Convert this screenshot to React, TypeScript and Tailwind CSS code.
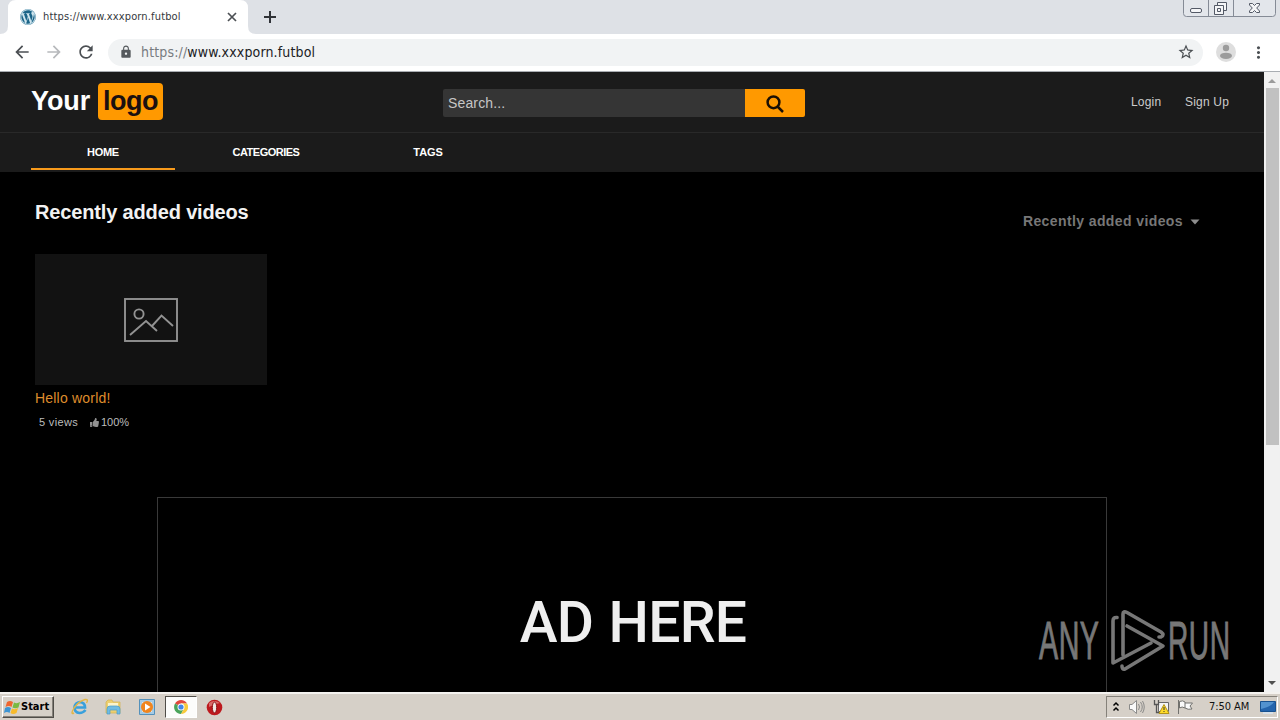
import React from "react";
import { FaThumbsUp, FaWordpress } from "react-icons/fa";
import { MdArrowBack, MdArrowForward, MdRefresh, MdLock, MdStarBorder, MdMoreVert } from "react-icons/md";

function WindowControls() {
  return (
    <svg className="absolute right-[3px] top-0" width="94" height="17" viewBox="0 0 94 17" fill="none" stroke="#858b96">
      <path d="M.5 0V13.5Q.5 16.500 3.500 16.500H89.500Q92.500 16.500 92.500 13.500V0M25.500 0V16M50.500 0V16" fill="#e3e6eb" />
      <g stroke="#535966" fill="#f4f5f7">
        <rect x="7.500" y="8.500" width="11" height="4" rx="1.500" />
        <path d="M34.500 2.500H43.500V10.500H34.500Z" />
        <path d="M31.500 5.500H40.500V14.500H31.500Z" />
        <path d="M34.500 8.500H37.500V11.500H34.500Z" />
        <path d="M66.500 3.500H69.500L71.500 5.500 73.500 3.500H76.500V5L73.700 8 76.500 11V12.500H73.500L71.500 10.500 69.500 12.500H66.500V11L69.300 8 66.500 5Z" />
      </g>
    </svg>
  );
}

function BrowserChrome() {
  return (
    <header className="h-[72px] shrink-0 border-b border-[#a9adb2] bg-white">
      <div className="relative flex h-[34px] bg-[#dee1e6]">
        <svg className="absolute left-0 top-0" width="256" height="34" viewBox="0 0 256 34">
          <path d="M0 34Q8 34 8 26V8Q8 0 16 0H240Q248 0 248 8V26Q248 34 256 34Z" fill="#fff" />
        </svg>
        <div className="relative flex w-[248px] items-center pl-5">
          <span className="flex h-4 w-4 items-center justify-center rounded-full bg-[#cfe5ee]">
            <FaWordpress size={16} color="#1b6488" />
          </span>
          <span className="ml-[7px] w-[183px] whitespace-nowrap font-['DejaVu_Sans_Condensed','DejaVu_Sans',sans-serif] text-[11px] font-stretch-condensed tracking-[0.15px] text-[#35383c]">
            https://www.xxxporn.futbol
          </span>
          <svg width="12" height="12" viewBox="0 0 12 12" stroke="#4c5054" strokeWidth="1.700">
            <path d="M2 2L10 10M10 2L2 10" />
          </svg>
        </div>
        <svg className="ml-[15px] mt-[10px]" width="14" height="14" viewBox="0 0 14 14" stroke="#303338" strokeWidth="2">
          <path d="M7 1V13M1 7H13" />
        </svg>
        <WindowControls />
      </div>
      <div className="flex h-9 items-center">
        <MdArrowBack className="ml-3" size={20} color="#4b4f53" />
        <MdArrowForward className="ml-3" size={20} color="#b7b9bc" />
        <MdRefresh className="ml-3" size={20} color="#4b4f53" />
        <div className="ml-3 flex h-[27px] w-[1095px] items-center rounded-full bg-[#f1f3f4] pl-[11px] pr-2">
          <MdLock size={14} color="#55595d" />
          <span className="ml-2 flex-1 whitespace-nowrap font-['DejaVu_Sans_Condensed','DejaVu_Sans',sans-serif] text-[14px] font-stretch-condensed tracking-[0.15px] text-[#202124]">
            <span className="text-[#777b80]">https://</span>www.xxxporn.futbol
          </span>
          <MdStarBorder size={18} color="#4b4f53" />
        </div>
        <svg className="ml-[13px]" width="20" height="20" viewBox="0 0 20 20">
          <circle cx="10" cy="10" r="10" fill="#dedede" />
          <circle cx="10" cy="6" r="3.200" fill="#9c9c9c" />
          <ellipse cx="10" cy="13.800" rx="6" ry="3.100" fill="#9c9c9c" />
        </svg>
        <MdMoreVert className="ml-[13px]" size={19} color="#4b4f53" />
      </div>
    </header>
  );
}

function SiteHeader() {
  return (
    <div className="h-[100px] shrink-0 bg-[#1b1b1b]">
      <div className="flex h-[61px] border-b border-[#292929]">
        <div className="ml-[31px] mt-[11px] flex h-[37px] w-[412px] items-center text-[27px] font-bold">
          <span className="w-[67px] whitespace-nowrap tracking-[-0.1px] text-white">Your</span>
          <span className="flex h-[37px] w-[65px] items-center justify-center rounded-[4px] bg-[#ff9900] tracking-[-0.5px] text-[#1b1010]">
            logo
          </span>
        </div>
        <div className="mt-[17px] flex h-7 w-[362px]">
          <div className="flex w-[302px] items-center rounded-l-[2px] bg-[#353535] pl-[5px] text-[14px] tracking-[0.15px] text-[#c6c6c6]">
            Search...
          </div>
          <div className="flex w-[60px] items-center justify-center rounded-r-[2px] bg-[#ff9900] pt-[2px]">
            <svg width="18" height="18" viewBox="0 0 18 18" fill="none" stroke="#1b1005">
              <circle cx="7.500" cy="7.300" r="5.900" strokeWidth="2.500" />
              <path d="M11.500 11.500L17 17" strokeWidth="2.500" />
            </svg>
          </div>
        </div>
        <div className="ml-[326px] mt-[22px] flex text-[12px] leading-4 tracking-[0.2px] text-[#cccccc]">
          <span className="w-[54px]">Login</span>
          <span className="whitespace-nowrap">Sign Up</span>
        </div>
      </div>
      <nav className="flex h-[39px] pl-[31px] text-[11px] font-bold text-white">
        <div className="h-[37px] w-[144px] border-b-2 border-[#f79a1b] pt-[11px] text-center leading-4 tracking-[-0.3px]">HOME</div>
        <div className="w-[182px] pt-[11px] text-center leading-4 tracking-[-0.5px]">CATEGORIES</div>
        <div className="w-[142px] pt-[11px] text-center leading-4 tracking-[-0.1px]">TAGS</div>
      </nav>
    </div>
  );
}

function VideoCard() {
  return (
    <article className="ml-[35px] mt-[17px] w-[232px]">
      <div className="flex h-[131px] items-center justify-center bg-[#121212]">
        <svg width="54" height="44" viewBox="0 0 54 44" fill="none" stroke="#929292" strokeWidth="1.900">
          <rect x="1" y="1" width="52" height="42" />
          <circle cx="15" cy="16" r="4.600" />
          <path d="M6 37L22 23L33 33M28 28L37.500 17.500L49 28" />
        </svg>
      </div>
      <h2 className="mt-[4px] text-[14px] leading-[18px] tracking-[0.2px] text-[#df8c2c]">Hello world!</h2>
      <div className="mt-2 flex items-center pl-1 text-[11px] leading-[14px] text-[#bdbdbd]">
        <span className="w-[51px] tracking-[0.35px]">5 views</span>
        <FaThumbsUp size={9} color="#929292" />
        <span className="ml-[2px]">100%</span>
      </div>
    </article>
  );
}

function Scrollbar() {
  return (
    <div className="flex w-4 shrink-0 flex-col items-center bg-[#f1f1f1]">
      <svg width="16" height="16" viewBox="0 0 16 16"><path d="M4 11L8 7L12 11Z" fill="#9b9b9b" /></svg>
      <div className="h-[357px] w-[13px] bg-[#c1c1c1]" />
      <svg className="mt-auto" width="16" height="17" viewBox="0 0 16 17"><path d="M4 6H12L8 10Z" fill="#505050" /></svg>
    </div>
  );
}

function Watermark() {
  return (
    <div className="absolute right-[48px] top-[609px] flex h-[63px] w-[193px] items-center text-[#777777]">
      <div className="flex w-[71px] items-center">
        <span className="origin-left scale-x-[0.54] whitespace-nowrap font-['Liberation_Sans',sans-serif] text-[53px] leading-none tracking-[1px] [-webkit-text-stroke:1px_#777777]">ANY</span>
      </div>
      <svg className="shrink-0" width="57" height="63" viewBox="70 0 57 63" fill="none" stroke="currentColor" strokeWidth="3.600" strokeLinecap="round" strokeLinejoin="round">
        <path d="M77 8.500Q73 8 73 12V54L111 34" />
        <path d="M83 46V5Q83 1.500 87 3.500L121 23Q125 26 121 28L119 28" />
        <path d="M87 17L123 37L85 60Q82 61 82 57" />
      </svg>
      <div className="ml-px flex w-[64px] items-center">
        <span className="origin-left scale-x-[0.53] whitespace-nowrap font-['Liberation_Sans',sans-serif] text-[53px] leading-none tracking-[1px] [-webkit-text-stroke:1px_#777777]">RUN</span>
      </div>
    </div>
  );
}

function Page() {
  return (
    <div className="flex h-[620px] shrink-0">
      <main className="flex min-w-0 flex-1 flex-col overflow-hidden bg-black">
        <SiteHeader />
        <div className="flex h-[65px] shrink-0 justify-between pl-[35px] pr-[64px]">
          <h1 className="pt-[28px] text-[20px] font-bold leading-6 tracking-[-0.15px] text-[#f2f2f2]">Recently added videos</h1>
          <div className="flex items-start pt-[40px] text-[14px] font-bold leading-[18px] tracking-[0.4px] text-[#777777]">
            <span>Recently added videos</span>
            <svg className="ml-[7px] mt-[7px]" width="10" height="6" viewBox="0 0 10 6"><path d="M.5 .5H9.500L5 5.500Z" fill="#8d8d8d" /></svg>
          </div>
        </div>
        <VideoCard />
        <div className="ml-[157px] mt-[68px] flex h-[250px] w-[950px] shrink-0 items-center justify-center border border-[#393939]">
          <span className="whitespace-nowrap pl-[2px] font-[Roboto,sans-serif] text-[57px] font-medium leading-none tracking-[-0.8px] text-[#efefef] [word-spacing:2px]">AD HERE</span>
        </div>
      </main>
      <Scrollbar />
    </div>
  );
}

function StartFlag() {
  return (
    <svg width="17" height="17" viewBox="0 0 17 17">
      <path d="M3 3Q6 1 9 3L7.500 8Q5 6 1.500 8Z" fill="#ef652f" />
      <path d="M10 3.500Q13 5 16 3L14.500 8.500Q11 10 8.500 8.500Z" fill="#79b943" />
      <path d="M1 9Q4 7 7 9L5.500 14Q3 12 0 14Z" fill="#3d94d3" />
      <path d="M8 9.500Q11 11 14 9L12.500 14Q9 16 6.500 14Z" fill="#f7ba2b" />
    </svg>
  );
}

function Taskbar() {
  return (
    <footer className="flex h-7 shrink-0 items-center border-t-2 border-[#f4f2ef] bg-[#d6d0c8]">
      <div className="ml-[2px] flex h-[22px] w-[52px] items-center border border-b-[#504d48] border-l-white border-r-[#504d48] border-t-white pl-px shadow-[inset_-1px_-1px_#85817a]">
        <StartFlag />
        <span className="font-['DejaVu_Sans_Condensed','DejaVu_Sans',sans-serif] text-[11px] font-bold font-stretch-condensed tracking-[0px] text-black">Start</span>
      </div>
      <svg className="ml-[17px]" width="18" height="18" viewBox="0 0 18 18" fill="none">
        <path d="M14.500 12Q12 15 8.500 15Q3.500 14.500 3.500 9.500Q4 4.500 9 4Q14 4.500 14 9.500H5" stroke="#39a0dc" strokeWidth="2.700" />
        <path d="M3 15Q-1 17 3 10Q8 3 14 1.500Q18 1 15.500 5" stroke="#e3b646" strokeWidth="1.400" />
      </svg>
      <svg className="ml-4" width="17" height="18" viewBox="0 0 17 18">
        <path d="M1 4L3 2H7L8 4H15V15H1Z" fill="#edcf70" stroke="#d2b34f" strokeWidth=".7" />
        <path d="M3 5H13V8H3Z" fill="#fbf4cb" />
        <path d="M2 16V11Q2 8 5 8H12Q15 8 15 11V16H12V12H5V16Z" fill="#6fbce3" stroke="#4a9bc6" strokeWidth=".7" />
      </svg>
      <svg className="ml-[17px]" width="17" height="18" viewBox="0 0 17 18">
        <path d="M.5 1.500H15.500V16.500H.5Z" fill="#a5cbe5" stroke="#5491bb" />
        <path d="M3 4H13V14H3Z" fill="#e3eef3" />
        <circle cx="8" cy="9" r="6" fill="#f0851e" /><path d="M6 5.500L11.500 9L6 12.500Z" fill="#fff" />
      </svg>
      <div className="ml-[9px] flex h-[22px] w-[32px] items-center justify-center border border-b-white border-l-[#504d48] border-r-white border-t-[#504d48] bg-[#fcfcfb]">
        <svg width="14" height="14" viewBox="0 0 14 14">
          <path d="M7 7L1 3.500A7 7 0 0 1 13.100 3.500H7Z" fill="#e1483d" />
          <path d="M7 7L1 3.500A7 7 0 0 0 7 14L10 8.800Z" fill="#4aa45b" />
          <path d="M7 14L10 8.800L7 3.500H13.100A7 7 0 0 1 7 14Z" fill="#f8ca3c" />
          <circle cx="7" cy="7" r="3.500" fill="#fff" /><circle cx="7" cy="7" r="2.600" fill="#4386e8" />
        </svg>
      </div>
      <svg className="ml-[9px]" width="17" height="17" viewBox="0 0 17 17">
        <circle cx="8.500" cy="8.500" r="7.800" fill="#bd191e" /><path d="M3 4Q8 0 14 4Q8 5 3 8Z" fill="#d86b69" />
        <ellipse cx="8.500" cy="8.500" rx="2.200" ry="5.400" fill="#f1e8e3" stroke="#891015" />
      </svg>
      <div className="ml-auto mr-[2px] flex h-[22px] w-[172px] items-center border border-b-white border-l-[#85817a] border-r-white border-t-[#85817a]">
        <svg className="ml-[5px]" width="8" height="12" viewBox="0 0 8 12" fill="none" stroke="#000" strokeWidth="1.500">
          <path d="M1.500 4.500L4 2L6.500 4.500M1.500 9.500L4 7L6.500 9.500" />
        </svg>
        <svg className="ml-[8px]" width="18" height="16" viewBox="0 0 18 16" fill="none" stroke="#8a8a89">
          <path d="M1.500 5.500H4L8.500 1.500V14.500L4 10.500H1.500Z" fill="#f9f9f9" />
          <path d="M10.500 5Q12.500 8 10.500 11M12.500 3Q16 8 12.500 13M14.500 2Q18 8 14.500 14" />
        </svg>
        <svg className="ml-[7px]" width="17" height="16" viewBox="0 0 17 16" fill="none">
          <path d="M5.500 3.500H15.500V12.500H5.500Z" fill="#f5f5f5" stroke="#696969" />
          <path d="M1.500 1V5.500H5.500V1M3.500 5.500V13.500H8" stroke="#555" strokeWidth="1.300" />
          <path d="M11 5.500L16 14.500H6Z" fill="#ffdb28" stroke="#b39317" /><path d="M11 8V11M11 12V13" stroke="#333" />
        </svg>
        <svg className="ml-[7px]" width="17" height="16" viewBox="0 0 17 16" fill="#fafafa" stroke="#71716e">
          <path d="M1.500 1V15M2.500 2.500Q6 1 8 3V9Q5 7 2.500 9ZM8 4L15.500 4L13 7L15 10Q11 11 8 9" />
        </svg>
        <span className="ml-[15px] w-[51px] whitespace-nowrap font-['DejaVu_Sans_Condensed','DejaVu_Sans',sans-serif] text-[11px] font-stretch-condensed tracking-[-0.05px] text-[#111]">7:50 AM</span>
        <svg width="16" height="15" viewBox="0 0 16 15">
          <path d="M.5 1.500H15.500V11.500H.5Z" fill="#2464ac" stroke="#18518f" />
          <path d="M1 2H14Q11 7 1 9Z" fill="#5292cf" /><path d="M3 12H13V14H3Z" fill="#d9e1e8" />
        </svg>
      </div>
    </footer>
  );
}

export default function App() {
  return (
    <div className="relative flex h-[720px] w-[1280px] flex-col overflow-hidden bg-black font-['Liberation_Sans',Arial,sans-serif]">
      <BrowserChrome />
      <Page />
      <Taskbar />
      <Watermark />
    </div>
  );
}
